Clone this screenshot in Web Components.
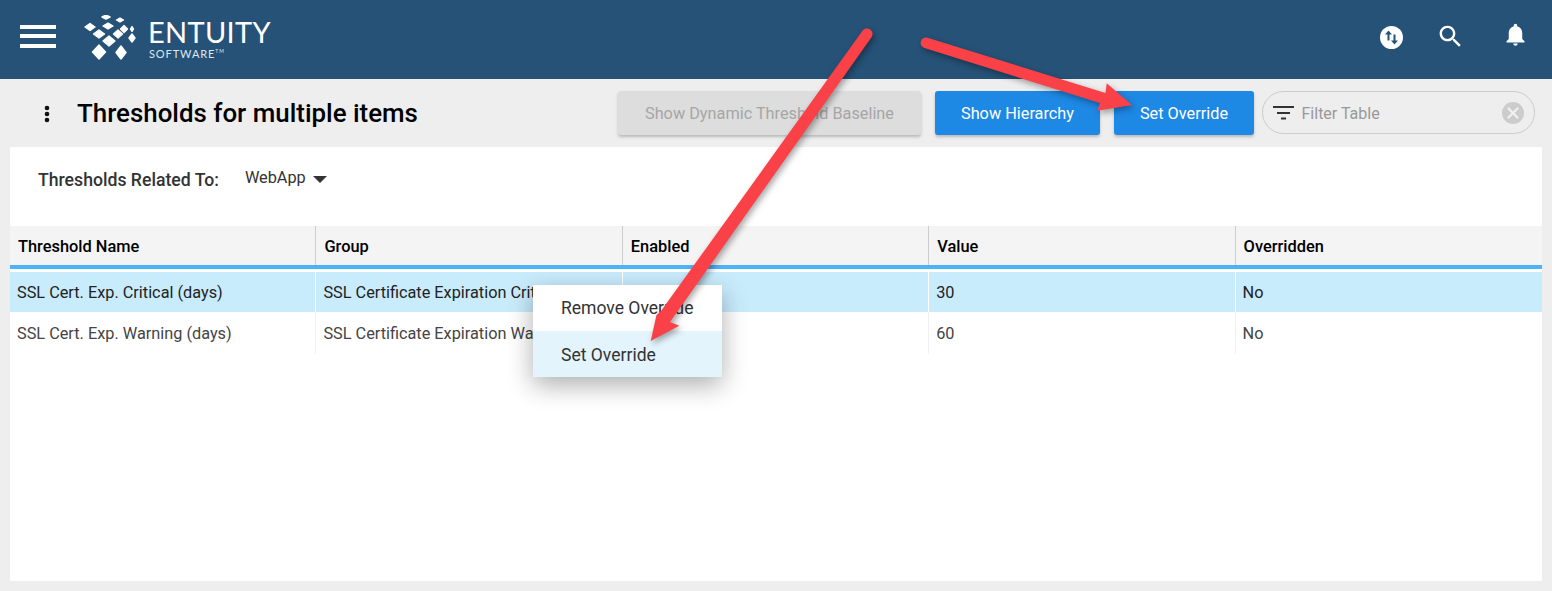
<!DOCTYPE html>
<html lang="en">
<head>
<meta charset="utf-8">
<title>Thresholds for multiple items</title>
<style>
  html, body { margin: 0; height: 591px; overflow: hidden; }
  body {
    position: relative;
    display: flex;
    flex-direction: column;
    background: #eeeeee;
    font-family: Roboto, "Liberation Sans", sans-serif;
    color: #333;
  }
</style>
</head>
<body>
  <app-header></app-header>
  <page-toolbar title-text="Thresholds for multiple items">
    <ent-button disabled style="width:303px">Show Dynamic Threshold Baseline</ent-button>
    <ent-button style="width:165px;margin-left:14px">Show Hierarchy</ent-button>
    <ent-button style="width:140px;margin-left:14px">Set Override</ent-button>
    <filter-box style="margin-left:8px"></filter-box>
  </page-toolbar>
  <thresholds-panel>
    <data-row head><span>Threshold Name</span><span>Group</span><span>Enabled</span><span>Value</span><span>Overridden</span></data-row>
    <data-row selected><span>SSL Cert. Exp. Critical (days)</span><span>SSL Certificate Expiration Critical</span><span></span><span>30</span><span>No</span></data-row>
    <data-row><span>SSL Cert. Exp. Warning (days)</span><span>SSL Certificate Expiration Warning</span><span></span><span>60</span><span>No</span></data-row>
  </thresholds-panel>
  <context-menu></context-menu>
  <annotation-arrows></annotation-arrows>

<script>
class AppHeader extends HTMLElement {
  constructor() {
    super();
    this.attachShadow({ mode: 'open' });
    this.shadowRoot.innerHTML = `
      <style>
        :host { display: flex; align-items: flex-start; height: 79px; flex: none; background: #265277; color: #fff; }
        svg { display: block; flex: none; }
        .burger { margin: 24px 0 0 20px; }
        .logo { margin: 15px 0 0 28px; }
        .brand { margin: 15px 0 0 8px; font-family: Lato, "Liberation Sans", sans-serif; }
        .name { font-size: 29px; line-height: 34px; letter-spacing: .3px; font-weight: 400; }
        .sub { font-size: 11px; line-height: 12px; letter-spacing: .9px; margin: -1px 0 0 1px; color: #dfe7ee; }
        .sub sup { font-size: 5px; vertical-align: 5px; line-height: 0; }
        .tools { display: flex; align-items: flex-start; margin-left: auto; padding-right: 23px; }
      </style>
      <svg class="burger" width="36" height="24" fill="#fff"><rect y="1" width="36" height="4"/><rect y="10" width="36" height="4"/><rect y="20" width="36" height="4"/></svg>
      <svg class="logo" width="56" height="46" viewBox="84 15 56 46" fill="#fff" stroke="#fff" stroke-width="1.4" stroke-linejoin="round">
        <path d="M106 15l4 2-4 2-4-2z"/><path d="M120 18l3.500 2-3.500 2-3.500-2z"/>
        <path d="M90 23.500l5 3.500-5 3.500-5-3.500z"/><path d="M108 23l5 3-5 3-5-3z"/>
        <path d="M124 25.500l3.500 3.500-3.500 3.500-3.500-3.500z"/><path d="M132 26.500l1.500 2.500-1.500 2.500-1.500-2.500z"/>
        <path d="M99 30l5.500 4-5.500 4-5.500-4z"/><path d="M118 30l4.500 4-4.500 4-4.500-4z"/>
        <path d="M132 34l3 4-3 4-3-4z"/><path d="M109 36l6 5-6 5-6-5z"/>
        <path d="M99 45l6.500 7-6.500 7-6.500-7z"/><path d="M121 46l5 6.500-5 6.500-5-6.500z"/>
      </svg>
      <div class="brand">
        <div class="name">ENTUITY</div>
        <div class="sub">SOFTWARE<sup>TM</sup></div>
      </div>
      <div class="tools">
        <svg style="margin-top:25.500px" width="23" height="23" viewBox="0 0 23 23">
          <circle cx="11.500" cy="11.500" r="11.500" fill="#fff"/>
          <path d="M8.500 4.500L5 8.500h2.500v6h2v-6H12zM14.500 18.500L18 14.500h-2.500v-6h-2v6H11z" fill="#265277"/>
        </svg>
        <svg style="margin:21.500px 0 0 33px" width="29" height="29" viewBox="0 0 24 24" fill="#fff"><path d="M15.500 14h-.79l-.28-.27C15.410 12.590 16 11.110 16 9.500 16 5.910 13.090 3 9.500 3S3 5.910 3 9.500 5.910 16 9.500 16c1.610 0 3.090-.59 4.230-1.570l.27.28v.79l5 4.990L20.490 19l-4.990-5zm-6 0C7.010 14 5 11.990 5 9.500S7.010 5 9.500 5 14 7.010 14 9.500 11.990 14 9.500 14z"/></svg>
        <svg style="margin:21px 0 0 37px" width="27" height="27" viewBox="0 0 24 24" fill="#fff"><path d="M12 22c1.100 0 2-.9 2-2h-4c0 1.100.9 2 2 2zm6-6v-5c0-3.070-1.630-5.640-4.500-6.320V4c0-.83-.67-1.500-1.500-1.500s-1.500.67-1.500 1.500v.68C7.640 5.360 6 7.920 6 11v5l-2 2v1h16v-1l-2-2z"/></svg>
      </div>
    `;
  }
}

class PageToolbar extends HTMLElement {
  constructor() {
    super();
    this.attachShadow({ mode: 'open' });
  }

  connectedCallback() {
    this.shadowRoot.innerHTML = `
      <style>
        :host { display: flex; align-items: flex-start; flex: none; height: 68px; box-sizing: border-box; padding: 12px 17px 0 0; }
        svg { display: block; flex: none; margin: 14px 0 0 44px; }
        h1 { margin: 3px 0 0 27px; font-size: 25.900px; line-height: 38px; font-weight: 500; color: #000; white-space: nowrap; }
        .actions { display: flex; align-items: flex-start; margin-left: auto; }
      </style>
      <svg width="6" height="18" fill="#111"><circle cx="3" cy="3" r="2.300"/><circle cx="3" cy="9" r="2.300"/><circle cx="3" cy="15" r="2.300"/></svg>
      <h1>${this.getAttribute('title-text')}</h1>
      <div class="actions"><slot></slot></div>
    `;
  }
}

class EntButton extends HTMLElement {
  constructor() {
    super();
    this.attachShadow({ mode: 'open' });
    this.shadowRoot.innerHTML = `
      <style>
        :host {
          display: flex; align-items: center; justify-content: center; flex: none;
          height: 44px; border-radius: 3px; font-size: 16.300px; font-weight: 400;
          background: #1e88e5; color: #fff; white-space: nowrap;
          box-shadow: 0 2px 3px rgba(0,0,0,.22);
        }
        :host([disabled]) { background: #dddddd; color: #a6a6a6; }
      </style>
      <slot></slot>
    `;
  }
}

class FilterBox extends HTMLElement {
  constructor() {
    super();
    this.attachShadow({ mode: 'open' });
    this.shadowRoot.innerHTML = `
      <style>
        :host {
          display: flex; align-items: center; flex: none; box-sizing: border-box;
          width: 273px; height: 43px; border: 1px solid #cccccc; border-radius: 22px;
          padding: 0 10px; color: #999; font-size: 16px;
        }
        svg { display: block; flex: none; }
        span { margin: 2px 0 0 7.500px; }
        .clear { margin-left: auto; }
      </style>
      <svg width="21" height="14" fill="#333"><rect y="0" width="21" height="2"/><rect x="4" y="6" width="13" height="2"/><rect x="8" y="11.500" width="5" height="2"/></svg>
      <span>Filter Table</span>
      <svg class="clear" width="22" height="22"><circle cx="11" cy="11" r="11" fill="#cccccc"/><path d="M6.500 6.500l9 9M15.500 6.500l-9 9" stroke="#f2f2f2" stroke-width="2.200" stroke-linecap="round"/></svg>
    `;
  }
}

class ThresholdsPanel extends HTMLElement {
  constructor() {
    super();
    this.attachShadow({ mode: 'open' });
    this.shadowRoot.innerHTML = `
      <style>
        :host { display: block; flex: none; height: 434px; margin: 0 10px; background: #fff; }
        .related { display: flex; align-items: flex-start; height: 79px; box-sizing: border-box; padding: 23px 0 0 28px; }
        .label { font-size: 17.650px; line-height: 20px; font-weight: 500; color: #333; }
        .value { margin: -2px 0 0 26px; font-size: 16.300px; line-height: 20px; color: #333; }
        .caret { width: 0; height: 0; margin: 6px 0 0 7.500px; border: 7px solid transparent; border-top-color: #333; border-bottom: 0; }
      </style>
      <div class="related">
        <div class="label">Thresholds Related To:</div>
        <div class="value">WebApp</div>
        <div class="caret"></div>
      </div>
      <slot></slot>
    `;
  }
}

class DataRow extends HTMLElement {
  constructor() {
    super();
    this.attachShadow({ mode: 'open' });
    this.shadowRoot.innerHTML = `
      <style>
        :host { display: grid; grid-template-columns: repeat(5, 1fr); height: 42px; font-size: 16.300px; color: #444; }
        :host([selected]) { background: #c9ecfd; height: 40px; margin-top: 3px; color: #222; }
        :host([head]) { height: 39px; background: #f4f4f4; color: #000; font-weight: 500; font-size: 16.400px; border-bottom: 4px solid #4db3fc; }
        ::slotted(span) {
          display: flex; align-items: center; box-sizing: border-box; min-width: 0;
          padding-left: 7px; white-space: nowrap; overflow: hidden;
          border-right: 1px solid #f0f0f0;
        }
        :host([selected]) ::slotted(span) { border-right-color: #fff; }
        :host([head]) ::slotted(span) { padding: 1px 0 0 8px; border-right-color: #cccccc; }
        ::slotted(span:last-child) { border-right: 0; }
      </style>
      <slot></slot>
    `;
  }
}

class ContextMenu extends HTMLElement {
  constructor() {
    super();
    this.attachShadow({ mode: 'open' });
    this.shadowRoot.innerHTML = `
      <style>
        :host {
          position: absolute; left: 533px; top: 285px; width: 189px; display: block;
          background: #fff; font-size: 17.550px; color: #333;
          box-shadow: 0 8px 24px rgba(0,0,0,.32);
        }
        div { height: 46px; line-height: 46px; padding-left: 28px; }
        .active { background: #e3f4fd; line-height: 48px; }
      </style>
      <div>Remove Override</div>
      <div class="active">Set Override</div>
    `;
  }
}

class AnnotationArrows extends HTMLElement {
  constructor() {
    super();
    this.attachShadow({ mode: 'open' });
    this.shadowRoot.innerHTML = `
      <style>
        :host { position: absolute; left: 0; top: 0; width: 1552px; height: 591px; display: block; pointer-events: none; }
        svg { display: block; filter: drop-shadow(2px 3px 3px rgba(0,0,0,.35)); }
      </style>
      <svg width="1552" height="591" fill="#fb4148">
        <path d="M862.500 30.800 A5.500 5.500 0 0 1 871.500 37.200 L670 322 L679.300 325.700 L650.700 341 L656.500 315 L661 311 Z"/>
        <path d="M927.500 37.800 L1105.500 93 L1106.700 83.300 L1132 105 L1097.300 110.700 L1100 103 L924.500 48 A5.200 5.200 0 0 1 927.500 37.800 Z"/>
      </svg>
    `;
  }
}

customElements.define('app-header', AppHeader);
customElements.define('page-toolbar', PageToolbar);
customElements.define('ent-button', EntButton);
customElements.define('filter-box', FilterBox);
customElements.define('thresholds-panel', ThresholdsPanel);
customElements.define('data-row', DataRow);
customElements.define('context-menu', ContextMenu);
customElements.define('annotation-arrows', AnnotationArrows);
</script>
</body>
</html>
